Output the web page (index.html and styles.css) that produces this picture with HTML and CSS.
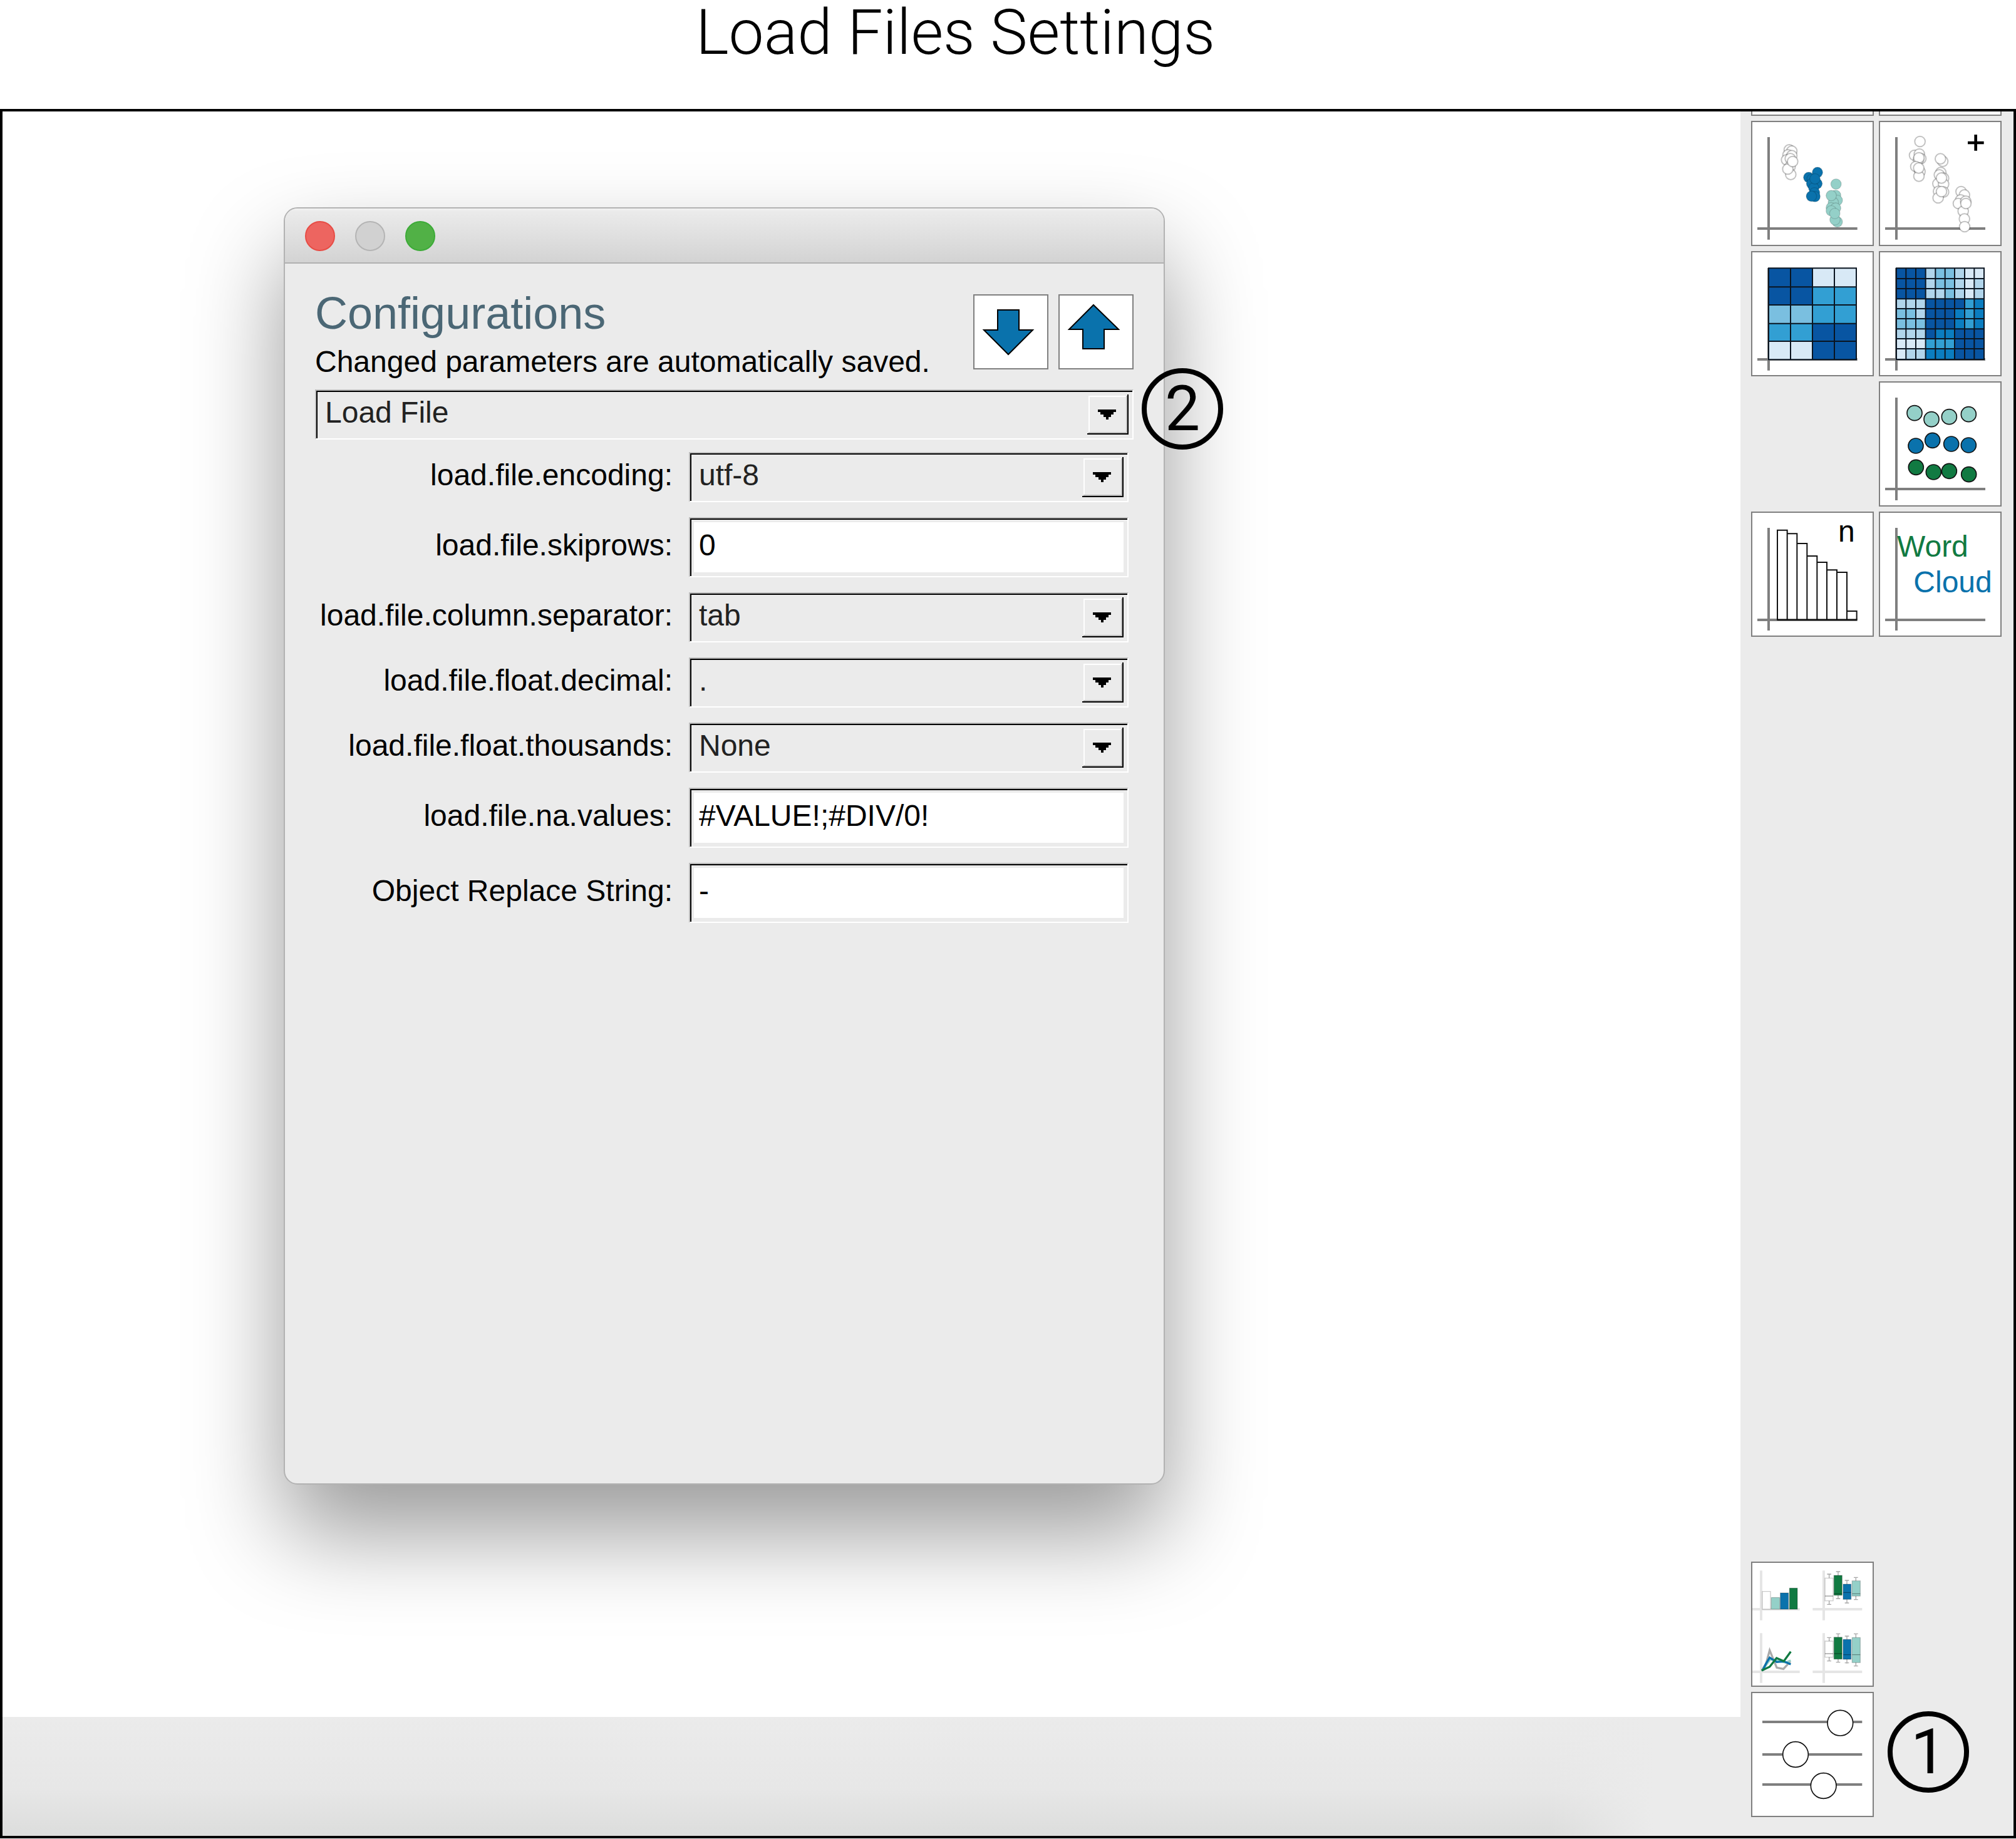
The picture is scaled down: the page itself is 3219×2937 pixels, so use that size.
FILE: index.html
```html
<!DOCTYPE html>
<html lang="en">
<head>
<meta charset="utf-8">
<title>Load Files Settings</title>
<link rel="stylesheet" href="styles.css">
</head>
<body>
<header class="page-header"><h1 class="page-title">Load Files Settings</h1></header>
<main class="app">
  <section class="workspace">
    <div class="window" role="dialog" aria-labelledby="config-title">
      <div class="titlebar">
        <button class="light light-close" aria-label="Close"></button>
        <button class="light light-min" aria-label="Minimize"></button>
        <button class="light light-zoom" aria-label="Zoom"></button>
      </div>
      <form class="config">
        <div class="config-head">
          <div class="config-text">
            <h2 class="config-title" id="config-title">Configurations</h2>
            <p class="config-note">Changed parameters are automatically saved.</p>
          </div>
          <div class="config-actions">
            <button type="button" class="arrow-button" aria-label="Download configuration">
              <svg viewBox="2 2 116 116"><path d="M39 25H73V57H95L56 96L17 57H39Z" fill="#0a72ac" stroke="#000" stroke-width="2"/></svg>
            </button>
            <button type="button" class="arrow-button" aria-label="Upload configuration">
              <svg viewBox="2 2 116 116"><path d="M56 17L96 56H73V87H39V56H17Z" fill="#0a72ac" stroke="#000" stroke-width="2"/></svg>
            </button>
          </div>
        </div>
        <div class="combo combo-main">
          <select class="field" aria-label="Configuration group"><option>Load File</option></select>
          <svg class="combo-arrow" viewBox="0 0 66 64"><use href="#drop"/></svg>
        </div>
        <div class="fields">
          <label class="label" for="encoding">load.file.encoding:</label>
          <div class="combo">
            <select class="field" id="encoding"><option>utf-8</option></select>
            <svg class="combo-arrow" viewBox="0 0 66 64"><use href="#drop"/></svg>
          </div>
          <label class="label" for="skiprows">load.file.skiprows:</label>
          <input class="field entry" id="skiprows" type="text" value="0">
          <label class="label" for="separator">load.file.column.separator:</label>
          <div class="combo">
            <select class="field" id="separator"><option>tab</option></select>
            <svg class="combo-arrow" viewBox="0 0 66 64"><use href="#drop"/></svg>
          </div>
          <label class="label" for="decimal">load.file.float.decimal:</label>
          <div class="combo">
            <select class="field" id="decimal"><option>.</option></select>
            <svg class="combo-arrow" viewBox="0 0 66 64"><use href="#drop"/></svg>
          </div>
          <label class="label" for="thousands">load.file.float.thousands:</label>
          <div class="combo">
            <select class="field" id="thousands"><option>None</option></select>
            <svg class="combo-arrow" viewBox="0 0 66 64"><use href="#drop"/></svg>
          </div>
          <label class="label" for="navalues">load.file.na.values:</label>
          <input class="field entry" id="navalues" type="text" value="#VALUE!;#DIV/0!">
          <label class="label" for="replace">Object Replace String:</label>
          <input class="field entry" id="replace" type="text" value="-">
        </div>
      </form>
      <span class="badge badge-window">2</span>
    </div>
  </section>
  <footer class="statusbar"></footer>
  <aside class="sidebar">
    <div class="tiles">
      <div class="tile-end"></div>
      <div class="tile-end"></div>
      <button class="tile" aria-label="Scatter plot">
        <svg viewBox="114 105 576 588">
          <g class="axis"><path d="M192 177V668M138 615H617"/></g>
          <g class="dot-white"><circle cx="291" cy="238" r="25"/><circle cx="303" cy="244" r="25"/><circle cx="285" cy="262" r="25"/><circle cx="303" cy="266" r="25"/><circle cx="278" cy="286" r="25"/><circle cx="296" cy="280" r="25"/><circle cx="295" cy="318" r="25"/><circle cx="298" cy="356" r="25"/><circle cx="284" cy="330" r="25"/><circle cx="307" cy="294" r="25"/></g>
          <g class="dot-soft" fill="#0a72ac"><circle cx="426" cy="346" r="25"/><circle cx="384" cy="370" r="25"/><circle cx="400" cy="378" r="25"/><circle cx="424" cy="400" r="25"/><circle cx="398" cy="400" r="25"/><circle cx="408" cy="420" r="25"/><circle cx="412" cy="444" r="25"/><circle cx="414" cy="462" r="25"/><circle cx="397" cy="460" r="25"/><circle cx="414" cy="377" r="25"/></g>
          <g class="dot-soft" fill="#94d0c8"><circle cx="515" cy="402" r="25"/><circle cx="513" cy="456" r="25"/><circle cx="521" cy="480" r="25"/><circle cx="502" cy="490" r="25"/><circle cx="492" cy="457" r="25"/><circle cx="492" cy="515" r="25"/><circle cx="513" cy="517" r="25"/><circle cx="492" cy="530" r="25"/><circle cx="521" cy="583" r="25"/><circle cx="510" cy="573" r="25"/><circle cx="509" cy="543" r="25"/></g>
        </svg>
      </button>
      <button class="tile" aria-label="Add scatter plot">
        <svg viewBox="726 105 576 588">
          <g class="axis"><path d="M804 177V668M750 615H1230"/></g>
          <g class="dot-white"><circle cx="917" cy="198" r="25"/><circle cx="891" cy="264" r="25"/><circle cx="914" cy="258" r="25"/><circle cx="921" cy="280" r="25"/><circle cx="910" cy="284" r="25"/><circle cx="912" cy="276" r="25"/><circle cx="897" cy="318" r="25"/><circle cx="917" cy="342" r="25"/><circle cx="912" cy="364" r="25"/><circle cx="911" cy="325" r="25"/><circle cx="1026" cy="293" r="25"/><circle cx="1015" cy="281" r="25"/><circle cx="1017" cy="347" r="25"/><circle cx="1010" cy="358" r="25"/><circle cx="1030" cy="374" r="25"/><circle cx="1003" cy="400" r="25"/><circle cx="1030" cy="402" r="25"/><circle cx="1020" cy="373" r="25"/><circle cx="1006" cy="437" r="25"/><circle cx="1030" cy="440" r="25"/><circle cx="1004" cy="468" r="25"/><circle cx="1020" cy="438" r="25"/><circle cx="1114" cy="438" r="25"/><circle cx="1130" cy="454" r="25"/><circle cx="1112" cy="478" r="25"/><circle cx="1101" cy="495" r="25"/><circle cx="1136" cy="484" r="25"/><circle cx="1124" cy="532" r="25"/><circle cx="1137" cy="495" r="25"/><circle cx="1130" cy="569" r="25"/><circle cx="1131" cy="606" r="25"/></g>
          <path d="M1146 204H1223M1184 165V242" stroke="#000" stroke-width="14"/>
        </svg>
      </button>
      <button class="tile" aria-label="Heatmap">
        <svg viewBox="114 729 576 588">
          <g class="axis"><path d="M192 804V1295M138 1242H617"/></g>
          <g transform="translate(192 807) scale(105 87)">
            <path fill="#0855a2" d="M0 0h2v2h-2zM2 3h2v2h-2z"/>
            <path fill="#d8e9f6" d="M2 0h2v1h-2zM0 4h2v1h-2z"/>
            <path fill="#329fd3" d="M2 1h2v2h-2zM0 3h2v1h-2z"/>
            <path fill="#7abfe0" d="M0 2h2v1h-2z"/>
          </g>
          <path class="grid" d="M192 804V1245M297 804V1245M402 804V1245M507 804V1245M612 804V1245M189 805H615M189 895H615M189 981H615M189 1070H615M189 1155H615M189 1243H615"/>
        </svg>
      </button>
      <button class="tile" aria-label="Correlation matrix">
        <svg viewBox="726 729 576 588">
          <g class="axis"><path d="M804 804V1295M750 1242H1230"/></g>
          <g transform="translate(804 807) scale(46.7 48.3)">
            <path fill="#b1d5eb" d="M0 0h9v9h-9z"/>
            <path fill="#0855a2" d="M0 0h3v3h-3zM3 3h3v3h-3zM6 3h1v1h-1zM3 6h1v1h-1zM6 6h3v3h-3z"/>
            <path fill="#7abfe0" d="M4 0h2v2h-2zM5 2h1v1h-1zM0 4h2v2h-2zM2 5h1v1h-1z"/>
            <path fill="#d8e9f6" d="M7 0h1v3h-1zM8 0h1v1h-1zM0 7h3v1h-3zM0 8h1v1h-1z"/>
            <path fill="#329fd3" d="M7 3h1v3h-1zM3 7h3v1h-3z"/>
            <path fill="#0b7dc0" d="M8 3h1v3h-1zM6 4h1v2h-1zM4 6h2v1h-2zM3 8h3v1h-3z"/>
          </g>
          <path class="grid" d="M804 804V1245M850 804V1245M897 804V1245M944 804V1245M991 804V1245M1037 804V1245M1083 804V1245M1131 804V1245M1177 804V1245M1224 804V1245M801 805H1227M801 855H1227M801 903H1227M801 952H1227M801 999H1227M801 1047H1227M801 1096H1227M801 1143H1227M801 1191H1227M801 1242H1227"/>
        </svg>
      </button>
      <button class="tile tile-right" aria-label="Cluster plot">
        <svg viewBox="726 66 576 588">
          <g class="axis"><path d="M804 138V630M750 576H1230"/></g>
          <g stroke="#111" stroke-width="5">
            <g fill="#94d0c8"><circle cx="891" cy="212" r="36"/><circle cx="972" cy="242" r="36"/><circle cx="1057" cy="230" r="36"/><circle cx="1150" cy="218" r="36"/></g>
            <g fill="#0a72ac"><circle cx="897" cy="369" r="36"/><circle cx="977" cy="343" r="36"/><circle cx="1067" cy="360" r="36"/><circle cx="1150" cy="366" r="36"/></g>
            <g fill="#117a42"><circle cx="898" cy="472" r="36"/><circle cx="982" cy="495" r="36"/><circle cx="1057" cy="490" r="36"/><circle cx="1151" cy="506" r="36"/></g>
          </g>
        </svg>
      </button>
      <button class="tile" aria-label="Counts">
        <svg viewBox="114 690 576 588">
          <g class="axis"><path d="M192 762V1254M138 1203H617"/></g>
          <path d="M234 1203V773H281V1203M281 790H328V1203M328 837H376V1203M376 897H424V1203M424 927H471V1203M471 964H519V1203M519 975H567V1203M567 1161H614V1203M232 1203H616" fill="none" stroke="#111" stroke-width="6"/>
          <text class="tile-text" x="525" y="827" fill="#000">n</text>
        </svg>
      </button>
      <button class="tile" aria-label="Word cloud">
        <svg viewBox="726 690 576 588">
          <g class="axis"><path d="M804 762V1254M750 1203H1230"/></g>
          <text class="tile-text" x="807" y="899" fill="#117a42">Word</text>
          <text class="tile-text" x="886" y="1070" fill="#0a72ac">Cloud</text>
        </svg>
      </button>
    </div>
    <div class="tiles">
      <button class="tile tile-left" aria-label="Chart gallery">
        <svg viewBox="114 78 576 588">
          <path d="M156 115V353M108 300H341M456 115V353M403 300H640M156 415V653M108 600H341M456 415V653M403 600H640" stroke="#000" stroke-opacity=".1" stroke-width="12"/>
          <g stroke="#000" stroke-opacity=".2" stroke-width="4">
            <path fill="#fff" d="M162 215H201V300H162ZM462 151H501V260H462ZM462 453H501V530H462Z"/>
            <path fill="#94d0c8" d="M205 244H245V300H205ZM592 164H631V237H592ZM592 436H631V556H592Z"/>
            <path fill="#0a72ac" d="M248 222H287V300H248ZM549 180H587V253H549ZM549 445H587V540H549Z"/>
            <path fill="#117a42" d="M292 199H330V300H292ZM505 138H544V233H505ZM505 434H544V539H505Z"/>
          </g>
          <path d="M482 130V151M472 132H492M482 260V279M472 277H492M525 118V138M515 120H535M525 233V251M515 249H535M567 160V180M557 162H577M567 253V272M557 270H577M610 146V164M600 148H620M610 237V256M600 254H620M482 434V453M472 436H492M482 530V550M472 548H492M525 416V434M515 418H535M525 539V556M515 554H535M567 427V445M557 429H577M567 540V560M557 557H577M610 416V436M600 418H620M610 556V574M600 572H620M462 237H501M505 226H544M549 220H587M592 226H631M462 513H501M505 513H544M549 518H587M592 518H631" fill="none" stroke="#000" stroke-opacity=".35" stroke-width="4"/>
          <g fill="none" stroke-width="10">
            <path stroke="#aaa" d="M160 592L180 560L197 497L231 580L263 586L296 550"/>
            <path stroke="#94d0c8" d="M160 594L200 540L240 548L275 556L298 545"/>
            <path stroke="#0a72ac" d="M163 594L180 560L197 532L231 553L265 550L298 564"/>
            <path stroke="#117a42" d="M158 594L197 576L230 534L265 549L298 503"/>
          </g>
        </svg>
      </button>
      <button class="tile tile-left" aria-label="Settings">
        <svg viewBox="114 702 576 588">
          <g class="axis"><path d="M162 840H640M162 996H640M162 1140H640"/></g>
          <g fill="#fff" stroke="#111" stroke-width="5"><circle cx="535" cy="845" r="61"/><circle cx="321" cy="996" r="61"/><circle cx="455" cy="1146" r="61"/></g>
        </svg>
      </button>
      <span class="badge badge-side">1</span>
    </div>
  </aside>
</main>
<svg class="defs" width="0" height="0" aria-hidden="true">
  <symbol id="drop" viewBox="0 0 66 64">
    <path fill="#ebebeb" d="M0 0H66V64H0Z"/>
    <path fill="#fff" d="M2 2H62V4H4V60H2Z"/>
    <path fill="#bdbdbd" d="M62 2H64V62H2V60H62Z"/>
    <path fill="#000" d="M64 0H66V64H0V62H64Z"/>
    <path fill="#000" d="M17 24H46V28H42V32H38V36H34V40H30V36H26V32H21V28H17Z"/>
  </symbol>
</svg>
</body>
</html>
```
FILE: styles.css
```css
* {
  box-sizing: border-box;
}

body {
  margin: 0;
  min-height: 100vh;
  display: flex;
  flex-direction: column;
  padding-bottom: 1px;
  background: #fff;
  color: #000;
  font-family: "Liberation Sans", Arial, sans-serif;
  font-size: 48px;
}

h1, h2, p {
  margin: 0;
  font-weight: 400;
}

button {
  padding: 0;
}

svg {
  display: block;
}

.defs {
  position: absolute;
}

.page-header {
  height: 174px;
  padding: 2px 168px 0 0;
  text-align: center;
}

.page-title {
  font: 300 100px/100px Roboto, sans-serif;
}

.app {
  flex: 1;
  display: grid;
  grid-template-columns: 1fr 436px;
  grid-template-rows: 1fr 190px;
  border: 4px solid #000;
}

.workspace {
  position: relative;
  overflow: hidden;
}

.statusbar {
  grid-column: 1;
  background:
    linear-gradient(to right, transparent 89%, #ebebeb 95%),
    linear-gradient(#ebebeb, #e7e7e7 60%, #dcdddc);
}

.sidebar {
  grid-column: 2;
  grid-row: 1 / 3;
  display: flex;
  flex-direction: column;
  justify-content: space-between;
  padding: 0 0 30px 17px;
  background: #ebebeb;
}

.tiles {
  display: grid;
  grid-template-columns: 196px 196px;
  gap: 8px;
}

.tile-end {
  height: 7px;
  border: 2px solid #7f7f7f;
  border-top: 0;
  background: #fff;
}

.tile {
  height: 200px;
  border: 2px solid #7f7f7f;
  background: #fff;
}

.tile-right {
  grid-column: 2;
}

.tile-left {
  grid-column: 1;
}

.tile svg,
.arrow-button svg {
  width: 100%;
  height: 100%;
}

.axis {
  fill: none;
  stroke: #7f7f7f;
  stroke-width: 12px;
}

.grid {
  fill: none;
  stroke: #0a1420;
  stroke-width: 6px;
}

.dot-white {
  fill: #fff;
  stroke: #000;
  stroke-opacity: 0.24;
  stroke-width: 6px;
}

.dot-soft {
  stroke: #000;
  stroke-opacity: 0.15;
  stroke-width: 4px;
}

.tile-text {
  font: 144px "Liberation Sans", Arial, sans-serif;
}

.window {
  position: absolute;
  left: 449px;
  top: 153px;
  width: 1407px;
  height: 2040px;
  border: 2px solid #b2b2b2;
  border-radius: 22px;
  background: #ebebeb;
  box-shadow: 0 76px 150px rgba(0, 0, 0, 0.4);
}

.titlebar {
  display: flex;
  gap: 32px;
  height: 88px;
  padding: 20px 32px;
  border-bottom: 2px solid #b0b0b0;
  border-radius: 20px 20px 0 0;
  background: linear-gradient(#f4f4f4, #ebebeb 4px, #d3d3d3);
}

.light {
  width: 48px;
  height: 48px;
  border: 2px solid;
  border-radius: 50%;
}

.light-close {
  background: #ed6560;
  border-color: #e74c45;
}

.light-min {
  background: #d1d1d1;
  border-color: #b4b4b4;
}

.light-zoom {
  background: #51b146;
  border-color: #3cab37;
}

.config {
  padding: 49px 48px 0;
}

.config-head {
  display: flex;
  justify-content: space-between;
  height: 152px;
}

.config-title {
  font-size: 72px;
  line-height: 60px;
  color: #4b6775;
}

.config-note {
  line-height: 96px;
}

.config-actions {
  display: flex;
  gap: 16px;
}

.arrow-button {
  width: 120px;
  height: 120px;
  border: 2px solid #7f7f7f;
  background: #fff;
}

.combo {
  display: grid;
}

.combo > * {
  grid-area: 1 / 1;
}

.combo-main {
  margin-bottom: 20px;
}

.combo-arrow {
  width: 66px;
  height: 64px;
  margin: 8px;
  justify-self: end;
  pointer-events: none;
}

.field {
  appearance: none;
  width: 100%;
  height: 80px;
  margin: 0;
  padding: 0 0 8px 14px;
  border: 2px solid;
  border-color: #bdbdbd #fff #fff #bdbdbd;
  border-radius: 0;
  background: #ebebeb;
  box-shadow: inset 2px 2px 0 #000;
  color: #222;
  font: inherit;
}

.entry {
  height: 96px;
  background: #fff;
  box-shadow: inset 2px 2px 0 #000, inset 0 0 0 6px #ebebeb;
  color: #000;
}

.fields {
  display: grid;
  grid-template-columns: 1fr 702px;
  gap: 24px 26px;
  padding-right: 8px;
}

.label {
  align-self: center;
  padding-bottom: 8px;
  text-align: right;
  white-space: nowrap;
}

.badge {
  display: flex;
  align-items: center;
  justify-content: center;
  width: 130px;
  height: 130px;
  border: 8px solid #000;
  border-radius: 50%;
  color: #000;
  font: 100px/100px Roboto, sans-serif;
}

.badge-window {
  position: absolute;
  left: 1368px;
  top: 255px;
}

.badge-side {
  align-self: center;
  margin: 0 0 8px 14px;
}
```
